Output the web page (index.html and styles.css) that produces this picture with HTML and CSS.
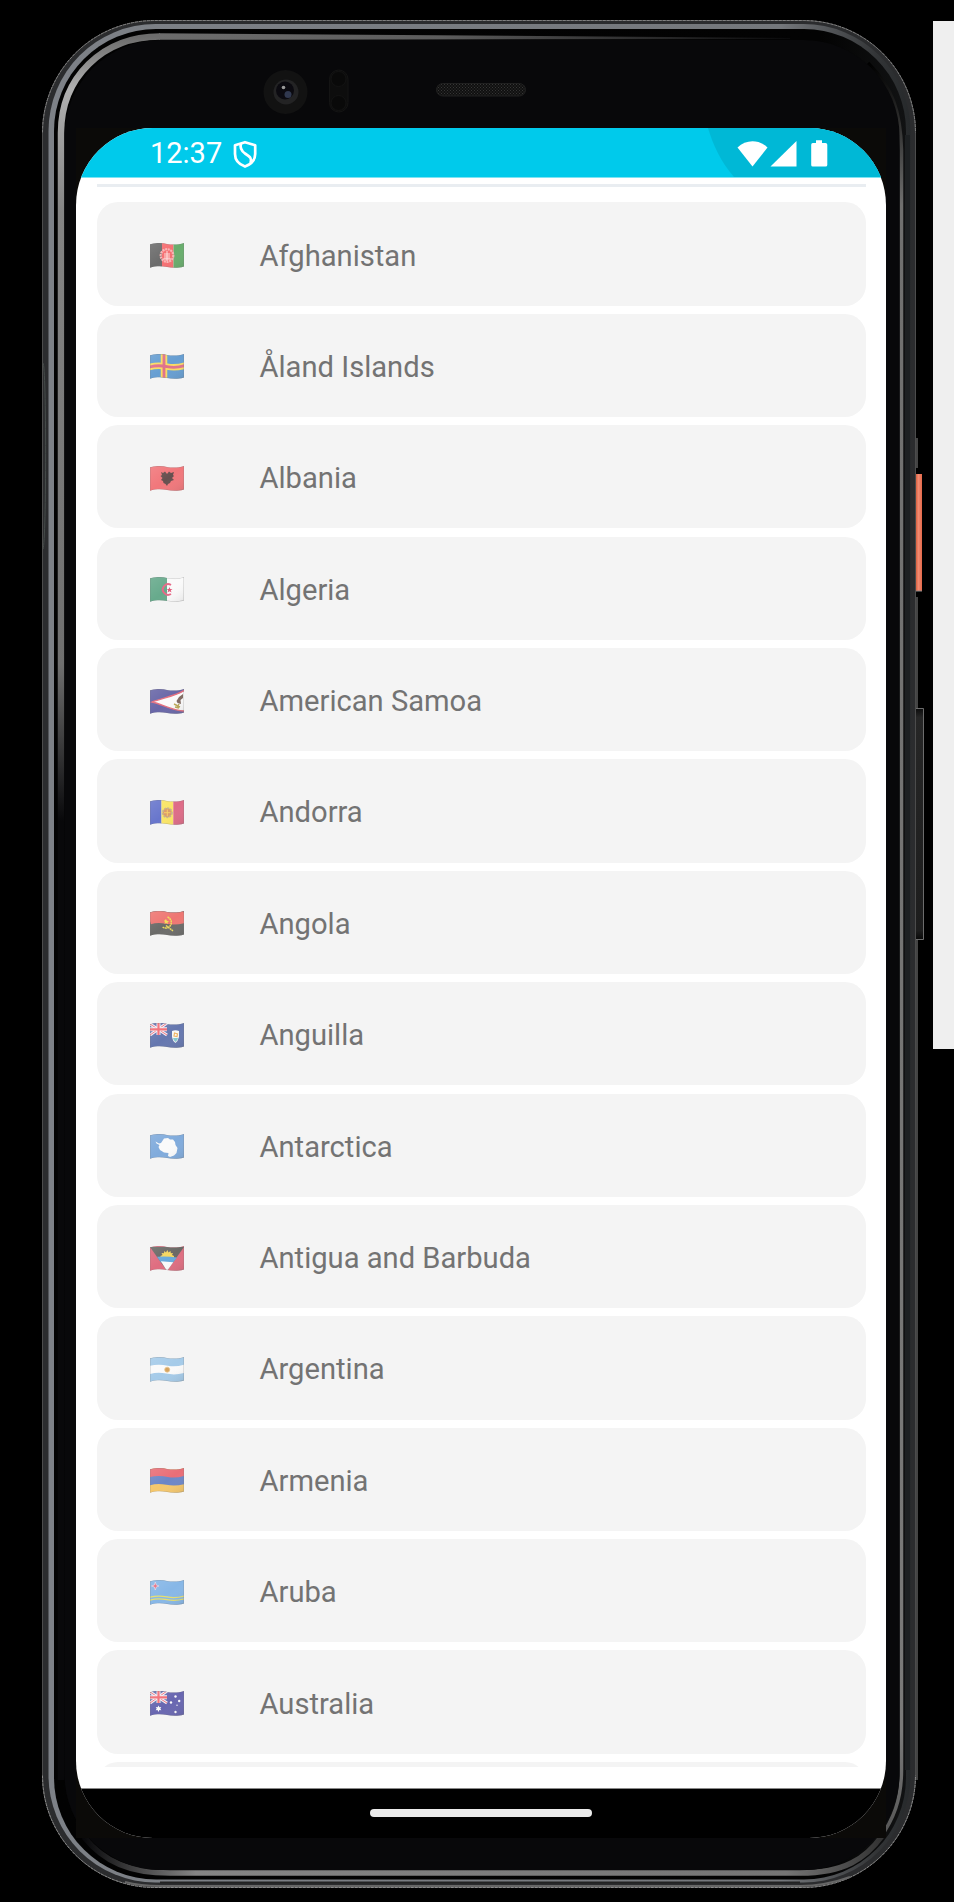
FILE: index.html
```
<!DOCTYPE html>
<html lang="en">
<head>
<meta charset="utf-8">
<title>Countries</title>
<link rel="stylesheet" href="styles.css">
</head>
<body>
<svg class="defs" width="0" height="0">
  <defs>
    <clipPath id="wave"><path d="M0 1.3C6 -.7 12 -.1 17 .9S28 2 34 0V23.4C28 25.3 22 24.9 17 24S6 22.8 0 24.8Z"/></clipPath>
    <linearGradient id="shade" x2="1" y2="1"><stop offset="0" stop-color="#fff" stop-opacity=".12"/><stop offset=".5" stop-color="#fff" stop-opacity="0"/><stop offset="1" stop-color="#333" stop-opacity=".12"/></linearGradient>
    <path id="line" d="M-1 1.5C6 -.7 12 -.1 17 .9S28 2 35 -.2"/>
    <g id="edge"><path d="M0 0H34V26H0Z" fill="url(#shade)"/><path d="M0 1.3C6 -.7 12 -.1 17 .9S28 2 34 0V23.4C28 25.3 22 24.9 17 24S6 22.8 0 24.8Z" fill="none" stroke="#777" stroke-opacity=".4" stroke-width="1"/></g>
    <g id="jack"><path d="M0 0H17V12H0Z" fill="#6570ae"/><path d="M0 1L17 12M17 0L0 12" stroke="#f3eef3" stroke-width="3"/><path d="M0 1L17 12M17 0L0 12" stroke="#ef7380" stroke-width="1"/><path d="M8.5 0V12M0 6.3H17" stroke="#f3eef3" stroke-width="4"/><path d="M8.5 0V12M0 6.3H17" stroke="#f36c75" stroke-width="2.2"/></g>
  </defs>
</svg>
<div class="stage">
  <div class="device">
    <svg class="frame" width="894" height="1902" viewBox="30 0 894 1902">
      <defs>
        <linearGradient id="rim" x2="1"><stop offset="0" stop-color="#7d8187"/><stop offset=".85" stop-color="#74777b"/><stop offset=".96" stop-color="#333537"/><stop offset="1" stop-color="#26292b"/></linearGradient>
        <linearGradient id="groove" x2="1"><stop offset="0" stop-color="#020202"/><stop offset=".9" stop-color="#030303"/><stop offset="1" stop-color="#111213"/></linearGradient>
        <linearGradient id="glassL" x1="0" y1="0" x2="0" y2="1"><stop offset="0" stop-color="#6c6c6c"/><stop offset=".03" stop-color="#b0b0b0"/><stop offset=".1" stop-color="#858585"/><stop offset=".36" stop-color="#707070"/><stop offset=".45" stop-color="#08080a"/><stop offset="1" stop-color="#08080a"/></linearGradient>
        <linearGradient id="glassT" x2="1"><stop offset="0" stop-color="#6c6c6c"/><stop offset=".45" stop-color="#5c5c5c"/><stop offset="1" stop-color="#0a0a0b"/></linearGradient>
        <linearGradient id="glassR" x1="0" y1="0" x2="0" y2="1"><stop offset="0" stop-color="#000"/><stop offset=".08" stop-color="#70706f"/><stop offset=".94" stop-color="#7a7a79"/><stop offset="1" stop-color="#555"/></linearGradient>
        <linearGradient id="glassB" x2="1"><stop offset="0" stop-color="#08080a"/><stop offset=".14" stop-color="#858585"/><stop offset=".88" stop-color="#757575"/><stop offset="1" stop-color="#333"/></linearGradient>
        <linearGradient id="power" x2="1"><stop offset="0" stop-color="#d9603f"/><stop offset=".4" stop-color="#f28b72"/><stop offset="1" stop-color="#e5694a"/></linearGradient>
        <linearGradient id="rocker" x1="0" y1="0" x2="0" y2="1"><stop offset="0" stop-color="#0a0a0a"/><stop offset=".04" stop-color="#262626"/><stop offset=".96" stop-color="#1d1d1d"/><stop offset="1" stop-color="#070707"/></linearGradient>
        <pattern id="mesh" width="3" height="3" patternUnits="userSpaceOnUse"><path d="M0 0H3V3H0Z" fill="#101010"/><path d="M0 0H1V1H0ZM1.500 1.500H2.500V2.500H1.500Z" fill="#363636"/></pattern>
      </defs>
      <rect x="42.500" y="20.500" width="873" height="1867" rx="112" fill="#2b2c2e" stroke="#4c4c4c"/>
      <path d="M42.500 132.500A112 112 0 0 1 154.500 20.500H803.500A112 112 0 0 1 915.500 132.500" fill="none" stroke="#808080" stroke-dasharray="3 1"/>
      <path d="M42.500 1775.500A112 112 0 0 0 154.500 1887.500H803.500A112 112 0 0 0 915.500 1775.500" fill="none" stroke="#8a8a8a" stroke-dasharray="3 1"/>
      <path d="M125 1882Q140 1886 160 1886H800Q825 1886 850 1877" fill="none" stroke="#666" stroke-width="2"/>
      <rect x="48.500" y="24" width="862" height="1858.500" rx="107" fill="url(#rim)"/>
      <rect x="54" y="29" width="852" height="1850.500" rx="102" fill="url(#groove)"/>
      <path d="M907.500 135V1770" stroke="#1d2022" stroke-width="5"/>
      <path d="M160 1882.500H800" stroke="#222" stroke-width="2"/>
      <path d="M61 1780V133C61 78 102 36.500 160 36.500" fill="none" stroke="url(#glassL)" stroke-width="6.500"/>
      <path d="M159 33.200L400 35L790 38V39L400 39.500L159 39.800Z" fill="url(#glassT)"/>
      <path d="M868 63C893 88 900.500 112 901.500 150V1770C901.500 1800 893 1820 880 1838" fill="none" stroke="url(#glassR)" stroke-width="3.500"/>
      <path d="M84 1837C104 1862 130 1873 170 1873H800C845 1873 866 1858 882 1836" fill="none" stroke="url(#glassB)" stroke-width="5.500"/>
      <rect x="64.500" y="40" width="835" height="1830" rx="96" fill="#08080a"/>
      <path d="M76 128H886V1838H76Z" fill="#0b0a08"/>
      <path d="M43 363C46.500 366 46.500 540 43 549" fill="none" stroke="#454b49"/>
      <path d="M917 438V468M917 597V708M917 940V1780" stroke="#5b5b5b" stroke-width="1.500"/>
      <path d="M916 474H922V591H916Z" fill="url(#power)"/><path d="M916 591H922" stroke="#888"/>
      <path d="M916 708H924V940H916Z" fill="url(#rocker)"/><path d="M916 708.500H923.500V939.500H916" fill="none" stroke="#6c6c6c"/>
      <circle cx="285.500" cy="92" r="22" fill="#121212"/><circle cx="286" cy="92" r="12.500" fill="#232324"/><circle cx="285" cy="90.500" r="9" fill="#0b0a10"/><circle cx="288" cy="94.500" r="3.500" fill="#30384f"/><circle cx="283.500" cy="87.500" r="1.800" fill="#999"/>
      <rect x="329.500" y="70" width="18.500" height="42" rx="9.200" fill="#0d0d0d" stroke="#141414"/><circle cx="338.500" cy="79" r="7.500" fill="#090909" stroke="#131313"/><circle cx="338.500" cy="103" r="7.500" fill="#090909" stroke="#131313"/>
      <rect x="436.500" y="83.500" width="89" height="12.500" rx="6.200" fill="url(#mesh)" stroke="#202020"/>
    </svg>
    <div class="screen">
      <header class="status">
        <svg class="status-shade" width="810" height="49" viewBox="0 0 810 49"><path d="M632 0C637 17 645 34 658 49H810V0Z" fill="#00b8d6"/></svg>
        <div class="status-row">
          <span class="clock">12:37</span>
          <svg class="shield" width="25" height="29" viewBox="0 0 25 29" fill="none" stroke="#fff" stroke-width="2.700"><path d="M12 2.200L22.200 5.200V14C22.200 20 17.500 24.500 12 26.600C6.500 24.500 2 20 2 14V5.200Z" stroke-linejoin="round"/><path d="M8 3.500C6.500 8 8 10.500 12 13.500C17.500 17 19 18.500 17.500 23"/></svg>
          <svg class="signals" width="92" height="28" viewBox="0 0 92 28" fill="#fff"><path d="M.5 7.500C9 -.8 22 -.8 30.500 7.500L15.500 26.500Z"/><path d="M59.500 1V26.600H33.500Z"/><path d="M74.500 3H79V.3H85V3H88.500Q90.300 3 90.300 4.800V25Q90.300 26.600 88.500 26.600H75.800Q74.200 26.600 74.200 25V4.800Q74.200 3 75.800 3Z"/></svg>
        </div>
      </header>
      <main class="content">
        <div class="divider"></div>
        <ul class="list">
          <li class="card"><svg class="flag" viewBox="0 0 34 26"><g clip-path="url(#wave)"><path d="M0 0H12V26H0Z" fill="#6c6c6c"/><path d="M12 0H23.500V26H12Z" fill="#f66f72"/><path d="M23.500 0H34V26H23.500Z" fill="#68ad6c"/><circle cx="17" cy="12.500" r="6.300" fill="none" stroke="#f8b5b5" stroke-width="2.200" stroke-dasharray="2 .7"/><path d="M14 10H20V16H14Z" fill="#faa4a4"/><path d="M17 8V18M13 16H21" stroke="#fce0df"/><use href="#edge"/></g></svg><span>Afghanistan</span></li>
          <li class="card"><svg class="flag" viewBox="0 0 34 26"><g clip-path="url(#wave)"><path d="M0 0H34V26H0Z" fill="#669ed2"/><g fill="none" stroke="#f9db62" stroke-width="6.500"><path d="M14 0V26"/><use href="#line" y="11.700"/></g><g fill="none" stroke="#df718c" stroke-width="2.800"><path d="M14 0V26"/><use href="#line" y="11.700"/></g><use href="#edge"/></g></svg><span>Åland Islands</span></li>
          <li class="card"><svg class="flag" viewBox="0 0 34 26"><g clip-path="url(#wave)"><path d="M0 0H34V26H0Z" fill="#f1777b"/><path d="M11 6L13 7L15 5.500L17 8L19 5.500L21 7L24 6L23 9L24 10L22 12L24 14L21 15L20 17L18 18L17 20L15.500 18L13.500 17L13 15L11 14L12.500 12L10.500 10L12 9Z" fill="#66504f"/><use href="#edge"/></g></svg><span>Albania</span></li>
          <li class="card"><svg class="flag" viewBox="0 0 34 26"><g clip-path="url(#wave)"><path d="M0 0H17V26H0Z" fill="#67aa8c"/><path d="M17 0H34V26H17Z" fill="#fafafa"/><path d="M21 8A5.300 5.300 0 1 0 21 17" fill="none" stroke="#e76887" stroke-width="1.900"/><path d="M19.500 10L20.300 12H22.500L20.800 13.200L21.500 15.500L19.500 14.200L17.500 15.500L18.200 13.200L16.800 12H18.700Z" fill="#e35b7c"/><use href="#edge"/></g></svg><span>Algeria</span></li>
          <li class="card"><svg class="flag" viewBox="0 0 34 26"><g clip-path="url(#wave)"><path d="M0 0H34V26H0Z" fill="#6866a7"/><path d="M35 1C26 7 12 9 2 13C12 15 23 22 35 22Z" fill="#fafafa" stroke="#e4707f" stroke-width="1.300"/><path d="M33 5L29 8L26.500 12L27.500 14L31 15L30.500 11L33 9Z" fill="#806a61"/><path d="M24 15L30 18M25 18L29 19M29 15L27 19" stroke="#bba756" stroke-width="1.400"/><use href="#edge"/></g></svg><span>American Samoa</span></li>
          <li class="card"><svg class="flag" viewBox="0 0 34 26"><g clip-path="url(#wave)"><path d="M0 0H11.500V26H0Z" fill="#6876cc"/><path d="M11.500 0H23.300V26H11.500Z" fill="#fae565"/><path d="M23.300 0H34V26H23.300Z" fill="#de6b87"/><circle cx="17.300" cy="12.700" r="4.600" fill="#dc9c69" stroke="#c7b48d" stroke-width="1.700" stroke-dasharray="2 1"/><path d="M17.300 9.500V16M14 12.700H20.500" stroke="#f5cf68"/><use href="#edge"/></g></svg><span>Andorra</span></li>
          <li class="card"><svg class="flag" viewBox="0 0 34 26"><g clip-path="url(#wave)"><path d="M0 0H34V26H0Z" fill="#6b6b69"/><use href="#line" y="5.500" fill="none" stroke="#ee7672" stroke-width="13"/><path d="M17.500 6C22 8 23 14 18 16.500C16 17.500 14 17 12.500 16M16 14.500L23 20" fill="none" stroke="#eedb5b" stroke-width="1.500" stroke-dasharray="2 .4"/><path d="M16 8L17 10H19L17.500 11.500L18 13L16 12L14.500 13L15 11L14 10Z" fill="#f5dc57"/><use href="#edge"/></g></svg><span>Angola</span></li>
          <li class="card"><svg class="flag" viewBox="0 0 34 26"><g clip-path="url(#wave)"><path d="M0 0H34V26H0Z" fill="#6577af"/><use href="#jack"/><path d="M22 8Q25.500 6.500 29 8V14Q28 18 25.500 20Q22.500 18 22 14Z" fill="#f8f8f6"/><path d="M23 15H28Q27.500 17.500 25.500 19Q23.500 17.500 23 15Z" fill="#83c9d0"/><path d="M24.500 10L27.500 11L27 13.500L24 13Z" fill="none" stroke="#f2b461" stroke-width="1.200"/><use href="#edge"/></g></svg><span>Anguilla</span></li>
          <li class="card"><svg class="flag" viewBox="0 0 34 26"><g clip-path="url(#wave)"><path d="M0 0H34V26H0Z" fill="#80abdc"/><path d="M5.500 7.500L9 9.500L11 9L14 4.500L18 4L20 5.500H23L25 8L25.500 11L27.500 14L26.500 19L24 21.500L20 23L18 22L18.500 19L14 18.500L10 16L8.500 13L9.500 11L6.500 9.500Z" fill="#fafafa"/><use href="#edge"/></g></svg><span>Antarctica</span></li>
          <li class="card"><svg class="flag" viewBox="0 0 34 26"><g clip-path="url(#wave)"><path d="M0 0H34V26H0Z" fill="#df6d80"/><path d="M0 1H34L17 25Z" fill="#6a6966"/><path d="M10.500 10L12.500 9L11.500 7L14 7.200L14.200 5L16 6.500L17.300 4L18.500 6.500L20.500 5L20.800 7.300L23 7L22 9L24 10V13H10.500Z" fill="#f5d760"/><path d="M7 10.800Q17 10 27 11.500L22.700 17L11 16.500Z" fill="#68aadc"/><path d="M10.800 15.300Q17 15.600 23.300 16.200L17 25Z" fill="#fafafa"/><use href="#edge"/></g></svg><span>Antigua and Barbuda</span></li>
          <li class="card"><svg class="flag" viewBox="0 0 34 26"><g clip-path="url(#wave)"><path d="M0 0H34V26H0Z" fill="#a5cbe9"/><use href="#line" y="11.800" fill="none" stroke="#fafafa" stroke-width="8"/><circle cx="17.200" cy="12.700" r="2.500" fill="#d6a35f" stroke="#e9c68d" stroke-width=".8"/><use href="#edge"/></g></svg><span>Argentina</span></li>
          <li class="card"><svg class="flag" viewBox="0 0 34 26"><g clip-path="url(#wave)"><path d="M0 0H34V26H0Z" fill="#f5c76c"/><use href="#line" y="3.800" fill="none" stroke="#e96e77" stroke-width="10"/><use href="#line" y="12" fill="none" stroke="#6c86c7" stroke-width="8"/><use href="#edge"/></g></svg><span>Armenia</span></li>
          <li class="card"><svg class="flag" viewBox="0 0 34 26"><g clip-path="url(#wave)"><path d="M0 0H34V26H0Z" fill="#87b7e7"/><g fill="none" stroke="#e7df6d" stroke-width="1.200"><use href="#line" y="16"/><use href="#line" y="18.800"/></g><path d="M5.300 2L6.300 5L9 6L6.300 7L5.300 10L4.300 7L1.500 6L4.300 5Z" fill="#e96b80" stroke="#dfdcea" stroke-width=".7"/><use href="#edge"/></g></svg><span>Aruba</span></li>
          <li class="card"><svg class="flag" viewBox="0 0 34 26"><g clip-path="url(#wave)"><path d="M0 0H34V26H0Z" fill="#6866b0"/><use href="#jack"/><g fill="#fafafa"><path d="M8.500 14.500L9.400 16.200L11.300 16L10.300 17.600L11.300 19.200L9.400 19.100L8.500 21L7.500 19.100L5.700 19.200L6.700 17.600L5.700 16L7.600 16.200Z"/><circle cx="25.500" cy="5.500" r="1.200"/><circle cx="21" cy="11.500" r="1.200"/><circle cx="29.200" cy="10" r="1.200"/><circle cx="27" cy="14.300" r=".7"/><circle cx="25.500" cy="21" r="1.200"/></g><use href="#edge"/></g></svg><span>Australia</span></li>
          <li class="card"></li>
        </ul>
      </main>
      <footer class="nav"><div class="home"></div></footer>
    </div>
  </div>
  <div class="panel"></div>
</div>
</body>
</html>
```
FILE: styles.css
```
body {
  margin: 0;
  background: #000;
  font-family: Roboto, sans-serif;
}
.defs { display: block; }
.stage {
  display: flex;
  align-items: flex-start;
  justify-content: space-between;
  width: 954px;
  height: 1902px;
  overflow: hidden;
}
.device {
  display: grid;
  width: 924px;
  height: 1902px;
}
.frame, .screen { grid-area: 1 / 1; }
.frame { margin-left: 30px; display: block; }
.screen {
  width: 810px;
  height: 1710px;
  margin: 128px 0 0 76px;
  border-radius: 77px;
  overflow: hidden;
  background: #fff;
  display: flex;
  flex-direction: column;
}
.status {
  display: grid;
  flex: none;
  height: 49px;
  background: #00caeb;
  border-bottom: 1px solid #7de3f3;
}
.status-shade, .status-row { grid-area: 1 / 1; }
.status-row {
  display: flex;
  align-items: flex-start;
  padding: 0 57px 0 74px;
  color: #fff;
}
.clock {
  font-size: 29px;
  line-height: 34px;
  padding-top: 8px;
}
.shield { margin: 12px 0 0 11px; }
.signals { margin: 12px 0 0 auto; }
.content {
  flex: none;
  height: 1589.5px;
  padding: 6px 20px 0 21px;
  box-sizing: border-box;
}
.divider {
  height: 3px;
  background: #e9edf1;
}
.list {
  list-style: none;
  margin: 15.4px 0 0;
  padding: 0;
  height: 1565.1px;
  overflow: hidden;
  display: flex;
  flex-direction: column;
  gap: 8.1px;
}
.card {
  flex: none;
  height: 103.3px;
  box-sizing: border-box;
  padding-left: 53px;
  border-radius: 21px;
  background: #f4f4f4;
  display: flex;
  align-items: center;
  color: #737373;
  font-size: 29.15px;
  line-height: 34px;
}
.flag {
  width: 34px;
  height: 26px;
  margin: 4px 75.5px 0 0;
}
.card span { padding-top: 3px; }
.nav {
  flex: 1;
  margin-top: 20px;
  border-top: 1px solid #888;
  background: #000;
  display: flex;
  justify-content: center;
  align-items: flex-start;
}
.home {
  width: 222px;
  height: 8px;
  margin-top: 20px;
  border-radius: 4px;
  background: #ebebeb;
}
.panel {
  width: 21px;
  height: 1028px;
  margin-top: 21px;
  background: #efefef;
}
```
